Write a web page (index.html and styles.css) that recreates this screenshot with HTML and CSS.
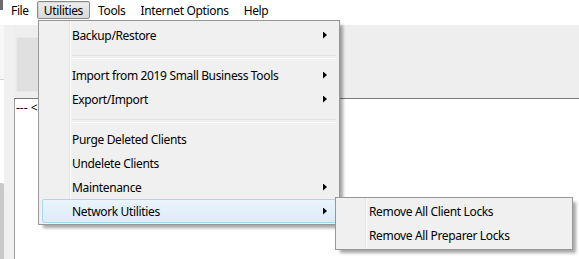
FILE: index.html
```html
<!DOCTYPE html>
<html lang="en">
<head>
    <meta charset="UTF-8">
    <title>Client Manager</title>
    <link rel="stylesheet" href="styles.css">
</head>
<body>
    <div class="window">
        <div class="menubar">
            <span class="corner"></span>
            <span class="menu-item">File</span>
            <span class="menu-item open">Utilities</span>
            <span class="menu-item">Tools</span>
            <span class="menu-item">Internet Options</span>
            <span class="menu-item">Help</span>
        </div>

        <div class="workspace">
            <div class="edge">
                <div class="edge-top"></div>
                <div class="edge-mid"></div>
                <div class="edge-bottom"></div>
            </div>
            <div class="content">
                <div class="toolbar">
                    <div class="tool-btn"></div>
                </div>
                <div class="list">--- &lt;</div>
            </div>
        </div>

        <!-- Utilities dropdown -->
        <div class="dropdown main-menu">
            <div class="item">Backup/Restore<span class="arrow"></span></div>
            <div class="separator"></div>
            <div class="item">Import from 2019 Small Business Tools<span class="arrow"></span></div>
            <div class="item">Export/Import<span class="arrow"></span></div>
            <div class="separator"></div>
            <div class="item">Purge Deleted Clients</div>
            <div class="item">Undelete Clients</div>
            <div class="item">Maintenance<span class="arrow"></span></div>
            <div class="item active">Network Utilities<span class="arrow"></span></div>
        </div>

        <!-- Network Utilities submenu -->
        <div class="dropdown submenu">
            <div class="item">Remove All Client Locks</div>
            <div class="item">Remove All Preparer Locks</div>
        </div>
    </div>
</body>
</html>
```

FILE: styles.css
```css
* {
    box-sizing: border-box;
}

body {
    margin: 0;
    font-family: "Noto Sans", sans-serif;
    font-size: 12px;
    letter-spacing: -0.35px;
    color: #000;
    background-color: #fff;
}

.window {
    position: relative;
    width: 579px;
    height: 259px;
    overflow: hidden;
    display: flex;
    flex-direction: column;
}

/* Menu bar */
.menubar {
    height: 25px;
    display: flex;
    align-items: flex-start;
    background-color: #fff;
}

.corner {
    width: 3px;
    height: 10px;
    background-color: #6b6b6b;
    margin-right: 1px;
}

.menu-item {
    height: 18px;
    margin-top: 1px;
    padding: 1px 6px 0;
    line-height: 16px;
    border: 1px solid transparent;
    border-radius: 2px;
    margin-right: 1px;
}

.menu-item.open {
    border-color: #8a8a8a;
    background: linear-gradient(#ededed, #d9d9d9);
    box-shadow: inset 1px 1px 0 rgba(0, 0, 0, 0.08);
}

/* Window body */
.workspace {
    flex: 1;
    display: flex;
}

.edge {
    width: 4px;
    display: flex;
    flex-direction: column;
}

.edge-top {
    height: 55px;
    background-color: #f7f7f7;
    border-bottom: 1px solid #d2d2d2;
}

.edge-mid {
    height: 103px;
    background-color: #fff;
}

.edge-bottom {
    flex: 1;
    background-color: #c9c9c9;
    border-top-right-radius: 2px;
}

.content {
    flex: 1;
    display: flex;
    flex-direction: column;
    background-color: #f0f0f0;
    padding-left: 10px;
}

.toolbar {
    height: 73px;
    padding: 12px 0 0 2px;
    background-color: #eeeeee;
}

.tool-btn {
    width: 60px;
    height: 55px;
    background-color: #e0e0e0;
    border: 1px solid #e8e8e8;
}

.list {
    flex: 1;
    background-color: #fff;
    border-top: 1px solid #7a7a7a;
    border-left: 1px solid #a0a0a0;
    padding: 2px 1px;
    line-height: 14px;
    letter-spacing: 0;
}

/* Dropdown menus */
.dropdown {
    position: absolute;
    background-color: #f0f0f0;
    border: 1px solid #979797;
    box-shadow: 4px 4px 3px -1px rgba(0, 0, 0, 0.35);
}

.main-menu {
    left: 38px;
    top: 20px;
    width: 302px;
    height: 205px;
    padding: 2px 3px;
    background-image: linear-gradient(to right,
        transparent 30px, #e2e3e3 30px, #e2e3e3 31px,
        #fff 31px, #fff 32px, transparent 32px);
}

.submenu {
    left: 335px;
    top: 197px;
    width: 238px;
    height: 53px;
    padding: 1px 3px;
    background-image: linear-gradient(to right,
        transparent 29px, #e2e3e3 29px, #e2e3e3 30px,
        #fff 30px, #fff 31px, transparent 31px);
}

.item {
    height: 24px;
    display: flex;
    align-items: center;
    justify-content: space-between;
    padding: 0 8px 0 29px;
    border: 1px solid transparent;
    border-radius: 2px;
}

.item.active {
    border-color: #aad7ef;
    background: linear-gradient(#eaf4fb, #dbecf8);
}

.arrow {
    width: 4px;
    height: 7px;
    background-color: #000;
    clip-path: polygon(0 0, 100% 50%, 0 100%);
}

.separator {
    height: 16px;
    margin-left: 30px;
    padding-top: 8px;
}

.separator::before {
    content: "";
    display: block;
    height: 2px;
    border-top: 1px solid #e0e0e0;
    border-bottom: 1px solid #fff;
}
```
